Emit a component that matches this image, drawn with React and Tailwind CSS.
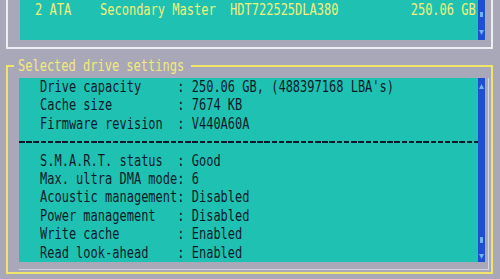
const rows = [
  "Drive capacity     : 250.06 GB, (488397168 LBA's)",
  "Cache size         : 7674 KB",
  "Firmware revision  : V440A60A",
];

const smartRows = [
  "S.M.A.R.T. status  : Good",
  "Max. ultra DMA mode: 6",
  "Acoustic management: Disabled",
  "Power management   : Disabled",
  "Write cache        : Enabled",
  "Read look-ahead    : Enabled",
];

function Arrow({ up }) {
  return (
    <svg width="7" height="7" viewBox="0 0 7 7" className="block">
      <path d={up ? "M3.5 1 L6 6 L1 6 Z" : "M1 1 L6 1 L3.5 6 Z"} fill="#6fb3f2" />
    </svg>
  );
}

function Row({ text }) {
  return (
    <div className="h-[18.4px] leading-[18.4px] whitespace-pre scale-y-[1.3] pl-[21px]">{text}</div>
  );
}

export default function App() {
  return (
    <div className="w-[500px] h-[279px] overflow-hidden bg-[#a9a8b8] font-['DejaVu_Sans_Mono',monospace] text-[12px]">
      {/* drive list */}
      <div className="ml-[6px] w-[487px] h-[49px] border-x-2 border-b-2 border-[#eceef4] pl-[12px] pr-[5px] pb-[7px] flex">
        <div className="w-[458px] bg-[#1fc2b2] text-[#f4ef7a]">
          <div className="h-[21px] leading-[21px] pl-[15px] whitespace-pre scale-y-[1.3]">
            {"2 ATA    Secondary Master  HDT722525DLA380          250.06 GB"}
          </div>
        </div>
        <div className="w-[7px] bg-[#1d4fd0] flex flex-col items-center pt-[12px]">
          <div className="w-[3px] h-[5px] bg-[#6fb3f2]" />
          <div className="mt-[12px]">
            <Arrow />
          </div>
        </div>
      </div>

      {/* selected drive settings */}
      <div className="relative mt-[16px] ml-[6px] w-[487px] h-[209px] border-2 border-[#f0e46a] pl-[11px] pt-[11px] pr-[2px] pb-[2px]">
        <div className="absolute left-[6px] top-[-9px] h-[16px] leading-[16px] bg-[#a9a8b8] pl-[4px] pr-[7px] text-[#f2ea7a] whitespace-pre">
          <div className="scale-y-[1.3]">Selected drive settings</div>
        </div>
        <div className="h-full border-r border-b border-[#d4d6e2] pr-[2px] pb-[7px] flex">
          <div className="w-[459px] h-full bg-[#1fc2b2] text-[#0c1a2a] overflow-hidden">
            {rows.map((r) => (
              <Row key={r} text={r} />
            ))}
            <div className="h-[18.5px] flex items-center">
              <div className="w-full h-[2px] bg-[repeating-linear-gradient(90deg,#0c1a2a_0_5.5px,transparent_5.5px_7.22px)]" />
            </div>
            {smartRows.map((r) => (
              <Row key={r} text={r} />
            ))}
          </div>
          <div className="w-[7px] h-full bg-[#1d4fd0] flex flex-col items-center pt-[5px] pb-[2px]">
            <Arrow up />
            <div className="flex-1" />
            <div className="w-[3px] h-[6px] bg-[#6fb3f2]" />
            <div className="mt-[10px]">
              <Arrow />
            </div>
          </div>
        </div>
      </div>
    </div>
  );
}
